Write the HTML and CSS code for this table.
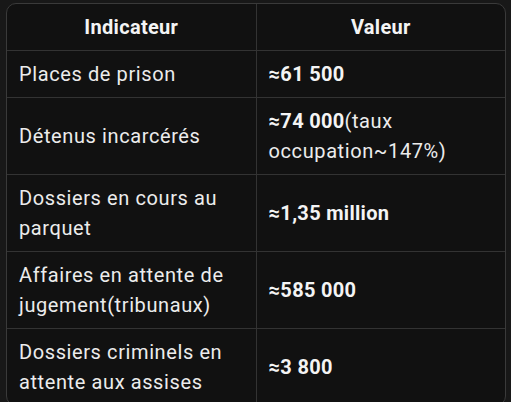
FILE: index.html
```html
<!DOCTYPE html>
<html lang="fr">
<head>
<meta charset="utf-8">
<link rel="stylesheet" href="styles.css">
</head>
<body>
<div class="wrap">
<table class="data">
<thead>
<tr><th>Indicateur</th><th>Valeur</th></tr>
</thead>
<tbody>
<tr><td>Places de prison</td><td><strong>≈61 500</strong></td></tr>
<tr><td>Détenus incarcérés</td><td><strong>≈74 000</strong>(taux occupation~147%)</td></tr>
<tr><td>Dossiers en cours au parquet</td><td><strong>≈1,35 million</strong></td></tr>
<tr><td>Affaires en attente de jugement(tribunaux)</td><td><strong>≈585 000</strong></td></tr>
<tr><td>Dossiers criminels en attente aux assises</td><td><strong>≈3 800</strong></td></tr>
</tbody>
</table>
</div>
</body>
</html>
```
FILE: styles.css
```css
html, body {
  margin: 0;
  padding: 0;
  background: #181818;
}
body {
  font-family: Roboto, "Liberation Sans", sans-serif;
  color: #ececec;
}
.wrap {
  padding: 3px 5px 0 6px;
}
.data {
  width: 500px;
  border-collapse: separate;
  border-spacing: 0;
  border: 1px solid #3a3a3a;
  border-radius: 10px;
  background: #111111;
  table-layout: fixed;
  overflow: hidden;
}
.data th, .data td {
  width: 50%;
  padding: 8px 12px;
  font-size: 20px;
  line-height: 30px;
  letter-spacing: 0.6px;
  text-align: left;
  vertical-align: middle;
  border-bottom: 1px solid #333333;
}
.data th + th, .data td + td {
  border-left: 1px solid #333333;
}
.data th {
  text-align: center;
  font-weight: 700;
  letter-spacing: 0.3px;
  color: #f4f4f4;
}
.data td strong {
  font-weight: 700;
  color: #f4f4f4;
  letter-spacing: 0.3px;
}
.data tbody tr:last-child td {
  border-bottom: none;
}
```
